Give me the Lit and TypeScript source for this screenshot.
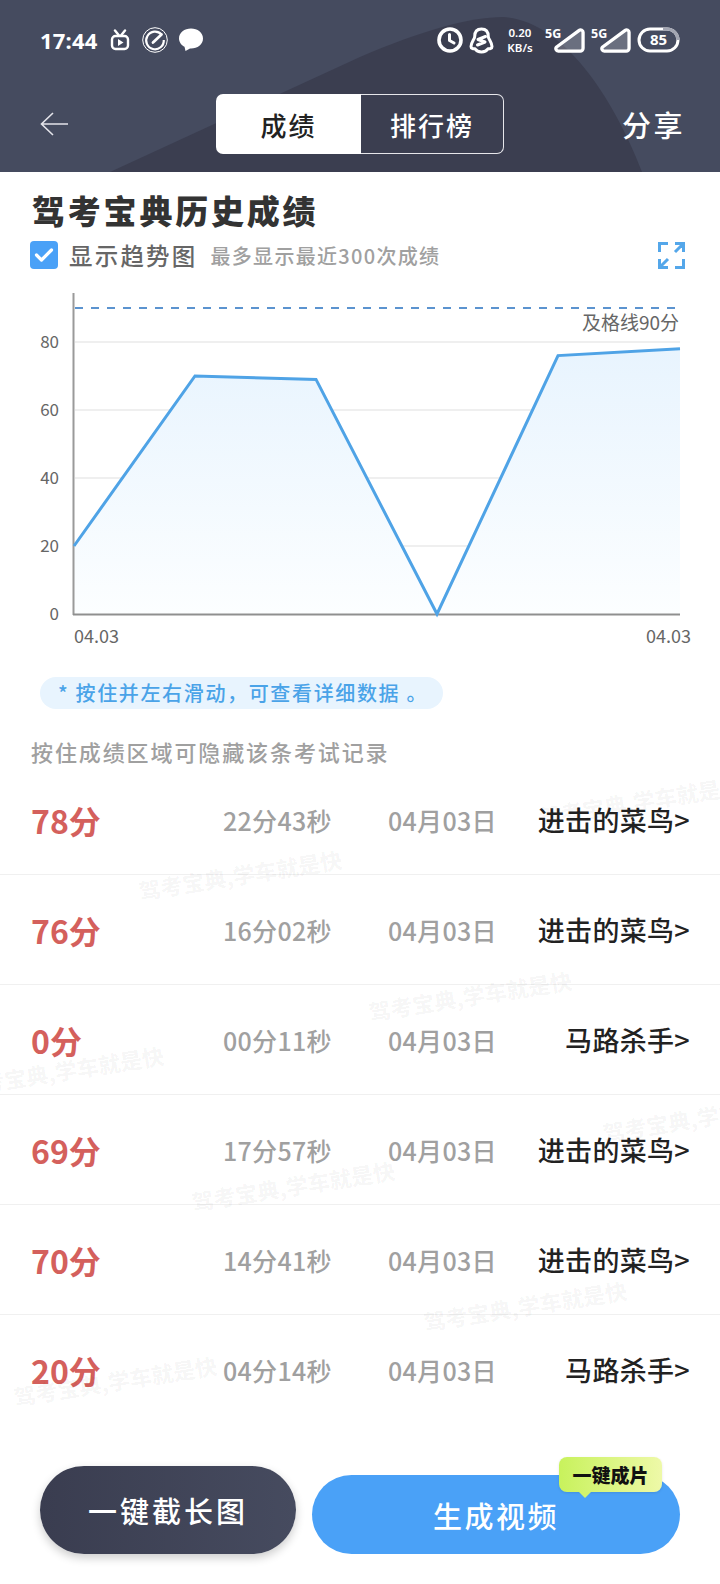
import { LitElement, html, css, svg } from "lit";
import { customElement } from "lit/decorators.js";

const ROWS = [
  ["78分", "22分43秒", "04月03日", "进击的菜鸟>"],
  ["76分", "16分02秒", "04月03日", "进击的菜鸟>"],
  ["0分", "00分11秒", "04月03日", "马路杀手>"],
  ["69分", "17分57秒", "04月03日", "进击的菜鸟>"],
  ["70分", "14分41秒", "04月03日", "进击的菜鸟>"],
  ["20分", "04分14秒", "04月03日", "马路杀手>"],
];

const MARKS: [number, number][] = [
  [240, 874], [470, 995], [62, 1070], [704, 1116], [293, 1185], [525, 1305], [115, 1380], [640, 800],
];

const Y = (v: number) => 614 - v * 3.4;
const PTS: [number, number][] = [[74, 20], [195, 70], [316, 69], [437, 0], [558, 76], [680, 78]];
const LINE = PTS.map(([x, v]) => `${x},${Y(v)}`).join(" ");

const TRI = "M26 3 a2.500 2.500 0 0 1 4 2 V21.500 a3 3 0 0 1 -3 3 H4.500 a2.500 2.500 0 0 1 -1.800 -4.300 Z";

@customElement("app-root")
export class AppRoot extends LitElement {
  static styles = css`
    :host {
      display: block;
      position: relative;
      width: 720px;
      height: 1584px;
      overflow: hidden;
      background: #fff;
      font-family: "Noto Sans CJK SC", "Noto Sans", sans-serif;
    }
    .head {
      position: relative;
      height: 172px;
      background: #454b5f;
      color: #fff;
      overflow: hidden;
    }
    .shape { position: absolute; left: 0; top: 0; }
    .status {
      position: relative;
      height: 80px;
      display: flex;
      align-items: center;
      padding: 0 40px;
    }
    .time { font: 700 22px "Noto Sans", sans-serif; width: 70px; letter-spacing: 0.2px; }
    .sicons { display: flex; align-items: center; }
    .spacer { flex: 1; }
    .speed {
      font: 600 11.500px/15px "Noto Sans", sans-serif; text-align: center; width: 28px;
      margin: 0 11px 0 12px;
    }
    .sim { display: flex; align-items: flex-start; width: 40px; height: 27px; margin-right: 6px; }
    .sim span { font: 700 12.500px/14px "Noto Sans", sans-serif; width: 10px; white-space: nowrap; }
    .nav {
      position: relative;
      margin-top: 14px;
      height: 60px;
      display: flex;
      align-items: center;
    }
    .back { margin-left: 40px; width: 176px; display: flex; }
    .tabs { display: flex; width: 288px; height: 60px; box-sizing: border-box; }
    .tab {
      display: flex; align-items: center; justify-content: center;
      font-size: 26px; font-weight: 500; letter-spacing: 2px;
    }
    .tab.on { width: 145px; background: #fff; color: #222; border-radius: 7px 0 0 7px; }
    .tab.off { flex: 1; border: 1px solid #e6e6ea; border-left: 0; border-radius: 0 7px 7px 0; }
    .share { margin-left: auto; margin-right: 35px; font-size: 29px; font-weight: 500; letter-spacing: 2.500px; }
    h1 {
      margin: 15px 0 0 32px;
      font-size: 33px; line-height: 46px; font-weight: 900; letter-spacing: 2.800px; color: #333;
    }
    .opts { display: flex; align-items: center; height: 28px; margin: 8px 35px 0 30px; }
    .check {
      width: 28px; height: 28px; border-radius: 4px; background: #4aa1f7;
      display: flex; align-items: center; justify-content: center; margin-right: 11px;
    }
    .opt { font-size: 23.500px; letter-spacing: 2.200px; color: #666; font-weight: 500; margin-right: 13px; }
    .opt2 { font-size: 20px; color: #a0a0a0; letter-spacing: 1.300px; font-weight: 500; flex: 1; white-space: nowrap; }
    .chart { display: block; margin-top: 18px; }
    .chart text { font: 400 17px "Noto Sans CJK SC", "Noto Sans", sans-serif; fill: #666; }
    .chart text.pass { font-size: 19px; }
    .chart text.day { font-size: 18px; }
    .pill {
      margin: 20px 0 0 40px; width: 403px; height: 32px; box-sizing: border-box;
      padding-left: 18px; border-radius: 16px; background: #e8f4fe; color: #4aa3e8;
      font-size: 20px; font-weight: 500; line-height: 32px; letter-spacing: 1.650px; white-space: nowrap;
    }
    .hint { margin: 27px 0 0 31px; font-size: 22px; line-height: 30px; letter-spacing: 1.900px; color: #a0a0a0; font-weight: 500; }
    .rows { margin-top: -1px; }
    .row {
      display: grid;
      grid-template-columns: 192px 165px 1fr auto;
      align-items: center;
      height: 109px;
      padding: 0 30px 0 31px;
      border-bottom: 1px solid #f0f0f0;
    }
    .row:last-child { border-bottom: 0; }
    .score { font-size: 32px; font-weight: 700; color: #d4605c; }
    .dur, .date { font-size: 25px; font-weight: 500; color: #a0a0a0; letter-spacing: 0.300px; }
    .name { font-size: 27px; font-weight: 500; color: #222; letter-spacing: 0.300px; }
    .mark {
      position: absolute; width: 260px; text-align: center; white-space: nowrap;
      transform: translate(-50%, -50%) rotate(-9deg);
      font-size: 22px; font-weight: 700; color: rgba(0, 0, 0, 0.055);
    }
    .btns {
      position: absolute; left: 40px; right: 40px; bottom: 30px;
      display: flex; align-items: flex-end; gap: 16px;
    }
    .btn { display: flex; align-items: center; justify-content: center; color: #fff; font-weight: 500; }
    .long {
      width: 256px; height: 88px; border-radius: 44px; font-size: 29px; letter-spacing: 3px;
      background: linear-gradient(90deg, #3a3d50, #464b5f);
      box-shadow: 0 4px 10px rgba(0,0,0,0.2);
    }
    .video {
      flex: 1; height: 79px; border-radius: 40px; background: #4aa1f7; font-size: 29px; letter-spacing: 2.500px;
      position: relative;
    }
    .badge {
      position: absolute; left: 247px; top: -18px; width: 103px; height: 35px; border-radius: 8px;
      background: linear-gradient(90deg, #c8f25c, #eef9a8);
      box-shadow: 0 1px 3px rgba(0,0,0,0.1);
      color: #111; font-size: 19px; font-weight: 900; line-height: 35px; text-align: center; letter-spacing: 0;
    }
    .badge::after {
      content: ""; position: absolute; left: 20px; bottom: -6px;
      border-left: 6px solid transparent; border-right: 6px solid transparent; border-top: 6px solid #d2f46c;
    }
  `;

  render() {
    return html`
      <div class="head">
        <svg class="shape" width="720" height="172" viewBox="0 0 720 172">
          <path d="M110 172 L360 57 C420 31 470 17 503 17 C560 20 610 90 642 172 Z" fill="#3b3e50"/>
        </svg>
        <div class="status">
          <div class="time">17:44</div>
          <div class="sicons">
            <svg width="20" height="22" viewBox="0 0 20 22" fill="none" stroke="#fff" stroke-width="2.400">
              <rect x="2" y="7" width="16" height="13" rx="3.500"/>
              <path d="M5 1.500l4 5M15 1.500l-4 5" stroke-linecap="round"/>
              <path d="M8 10l5.500 3.500-5.500 3.500z" fill="#fff" stroke="none"/>
            </svg>
            <svg width="26" height="26" viewBox="0 0 26 26" fill="none" stroke="#fff" style="margin-left:12px">
              <circle cx="13" cy="13" r="12.300" stroke-width="1"/>
              <path d="M19.500 7.500A8.800 8.800 0 1 0 21.800 13" stroke-width="2.200"/>
              <path d="M11 15.500l8.500-8" stroke-width="2.800" stroke-linecap="round"/>
            </svg>
            <svg width="24" height="24" viewBox="0 0 24 24" style="margin-left:11px">
              <path d="M12 .5C5.500 .5 0 4.500 0 10.500 0 14.500 3 17.500 5.500 18.800L6.500 23 11 20.500h1c6.500 0 12-4 12-10S18.500 .5 12 .5z" fill="#fff"/>
            </svg>
          </div>
          <div class="spacer"></div>
          <div class="sicons">
            <svg width="26" height="26" viewBox="0 0 26 26" fill="none" stroke="#fff">
              <circle cx="13" cy="13" r="11" stroke-width="3.600"/>
              <path d="M12.500 7.500v6l4.500 2.500" stroke-width="3" stroke-linecap="round" stroke-linejoin="round"/>
            </svg>
            <svg width="25" height="27" viewBox="0 0 25 27" fill="none" stroke="#fff" stroke-width="3" stroke-linecap="round" stroke-linejoin="round" style="margin-left:6px">
              <path d="M12.500 2c5 0 6.800 3.500 6.800 7.500 0 2.500 3.700 6 3.700 10 0 2-2 2.500-4 2.300-1.500 2.500-4 3.200-6.500 3.200s-5-.7-6.500-3.200c-2 .2-4-.3-4-2.300 0-4 3.700-7.500 3.700-10C5.700 5.500 7.500 2 12.500 2z"/>
              <path d="M16.500 9.500L9 12.500l7 2.500-7.500 3" stroke-width="3"/>
            </svg>
            <div class="speed">0.20<br />KB/s</div>
            <div class="sim">
              <span>5G</span>
              <svg width="32" height="27" viewBox="0 0 32 27" style="margin-left:-1px">
                <path d=${TRI} fill="rgba(255,255,255,0.2)" stroke="#fff" stroke-width="3.400" stroke-linejoin="round"/>
              </svg>
            </div>
            <div class="sim">
              <span>5G</span>
              <svg width="32" height="27" viewBox="0 0 32 27" style="margin-left:-1px">
                <path d=${TRI} fill="rgba(255,255,255,0.2)" stroke="#fff" stroke-width="3.400" stroke-linejoin="round"/>
              </svg>
            </div>
            <svg width="43" height="26" viewBox="0 0 43 26">
              <rect x="2" y="2" width="39" height="22" rx="11" fill="none" stroke="#fff" stroke-width="3"/>
              <path d="M26 2 H30 a11 11 0 0 1 11 11" fill="none" stroke="#a3a6b2" stroke-width="3.200"/>
              <text x="21.500" y="18.300" text-anchor="middle" fill="#fff" style="font:700 15px 'Noto Sans',sans-serif">85</text>
            </svg>
          </div>
        </div>
        <div class="nav">
          <div class="back">
            <svg width="28" height="24" viewBox="0 0 28 24" fill="none" stroke="#e4e4ea" stroke-width="1.600">
              <path d="M28 12H2M13 1L1.500 12 13 23"/>
            </svg>
          </div>
          <div class="tabs">
            <div class="tab on">成绩</div>
            <div class="tab off">排行榜</div>
          </div>
          <div class="share">分享</div>
        </div>
      </div>

      <h1>驾考宝典历史成绩</h1>
      <div class="opts">
        <div class="check">
          <svg width="20" height="16" viewBox="0 0 20 16" fill="none" stroke="#fff" stroke-width="3.200" stroke-linecap="round" stroke-linejoin="round">
            <path d="M2.500 8l5 5 10-10"/>
          </svg>
        </div>
        <div class="opt">显示趋势图</div>
        <div class="opt2">最多显示最近300次成绩</div>
        <svg width="27" height="27" viewBox="0 0 27 27" fill="none" stroke="#54a7ea" stroke-width="3">
          <path d="M1.500 10V1.500H10M17 1.500h8.500V10M25.500 1.500 L17 10M1.500 17v8.500H10M1.500 25.500 L10 17M17 25.500h8.500V17"/>
        </svg>
      </div>

      <svg class="chart" width="720" height="370" viewBox="0 287 720 370">
        <defs>
          <linearGradient id="fill" x1="0" y1="0" x2="0" y2="1">
            <stop offset="0" stop-color="#e8f4fe"/>
            <stop offset="1" stop-color="#fcfeff"/>
          </linearGradient>
        </defs>
        ${[80, 60, 40, 20].map((v) => svg`<line x1="75" x2="680" y1=${Y(v)} y2=${Y(v)} stroke="#efefef" stroke-width="2"/>`)}
        <polygon points="74,614 ${LINE} 680,614" fill="url(#fill)"/>
        ${[80, 60, 40, 20, 0].map((v) => svg`<text x="59" y=${Y(v) + 6} text-anchor="end">${v}</text>`)}
        <line x1="75" x2="676" y1="308" y2="308" stroke="#5b93cf" stroke-width="2" stroke-dasharray="8 8"/>
        <text class="pass" x="679" y="330" text-anchor="end">及格线90分</text>
        <line x1="73.500" x2="73.500" y1="293" y2="615" stroke="#9a9a9a" stroke-width="2"/>
        <line x1="73" x2="680" y1="614.500" y2="614.500" stroke="#8f8f8f" stroke-width="2"/>
        <polyline points=${LINE} fill="none" stroke="#4fa3e6" stroke-width="3"/>
        <text class="day" x="74" y="643">04.03</text>
        <text class="day" x="691" y="643" text-anchor="end">04.03</text>
      </svg>

      <div class="pill">* 按住并左右滑动，可查看详细数据 。</div>
      <div class="hint">按住成绩区域可隐藏该条考试记录</div>

      <div class="rows">
        ${ROWS.map(
          (r) => html`<div class="row">
            <div class="score">${r[0]}</div>
            <div class="dur">${r[1]}</div>
            <div class="date">${r[2]}</div>
            <div class="name">${r[3]}</div>
          </div>`
        )}
      </div>

      ${MARKS.map(([x, y]) => html`<div class="mark" style="left:${x}px;top:${y}px">驾考宝典,学车就是快</div>`)}

      <div class="btns">
        <div class="btn long">一键截长图</div>
        <div class="btn video">
          生成视频
          <div class="badge">一键成片</div>
        </div>
      </div>
    `;
  }
}
